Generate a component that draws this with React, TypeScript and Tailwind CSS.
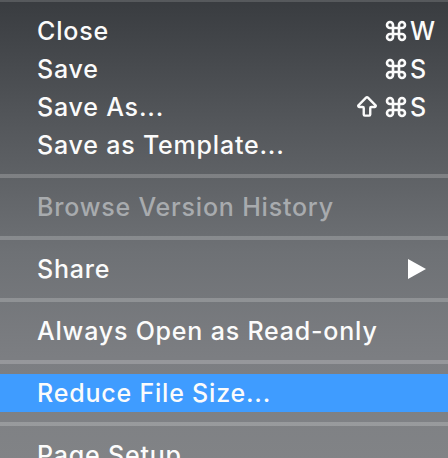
import type { ReactNode } from "react";
import { ArrowBigUp, Command } from "lucide-react";

type Item = {
  label: string;
  shift?: boolean;
  keyChar?: string;
  disabled?: boolean;
  active?: boolean;
  submenu?: boolean;
};

const GROUPS: Item[][] = [
  [
    { label: "Close", keyChar: "W" },
    { label: "Save", keyChar: "S" },
    { label: "Save As...", shift: true, keyChar: "S" },
    { label: "Save as Template..." },
  ],
  [{ label: "Browse Version History", disabled: true }],
  [{ label: "Share", submenu: true }],
  [{ label: "Always Open as Read-only" }],
  [{ label: "Reduce File Size...", active: true }],
  [{ label: "Page Setup" }],
];

function Separator() {
  return (
    <div className="py-[10px]">
      <div className="h-[4px] bg-white/20" />
    </div>
  );
}

function Row({ item }: { item: Item }) {
  let right: ReactNode = null;
  if (item.keyChar) {
    right = (
      <span className="flex items-center">
        {item.shift && <ArrowBigUp size={26} strokeWidth={2.2} className="mr-[4px]" />}
        <Command size={24} strokeWidth={2.6} />
        <span className="ml-[2px] w-[28px] text-left tracking-normal">{item.keyChar}</span>
      </span>
    );
  } else if (item.submenu) {
    right = (
      <svg width="18" height="20" viewBox="0 0 18 20" className="mr-[12px]">
        <polygon points="0,0 18,10 0,20" fill="#ffffff" />
      </svg>
    );
  }

  return (
    <div
      className={
        "flex h-[38px] items-center justify-between pl-[37px] pr-[10px] " +
        (item.active ? "bg-[#3f9cff] " : "") +
        (item.disabled ? "text-[#a8abae]" : "text-[#fbfbfb]")
      }
    >
      <span>{item.label}</span>
      {right}
    </div>
  );
}

export default function App() {
  return (
    <div className="h-[458px] w-[448px] overflow-hidden bg-[linear-gradient(180deg,#393c40_0%,#55585c_28%,#6e7175_55%,#7c7e82_78%,#818386_100%)] font-['Inter',sans-serif] text-[25px] font-medium leading-none tracking-[0.8px]">
      <div className="h-[2px] bg-white/15" />
      <div className="h-[10px]" />
      {GROUPS.map((group, gi) => (
        <div key={gi}>
          {gi > 0 && <Separator />}
          {group.map((item) => (
            <Row key={item.label} item={item} />
          ))}
        </div>
      ))}
    </div>
  );
}
